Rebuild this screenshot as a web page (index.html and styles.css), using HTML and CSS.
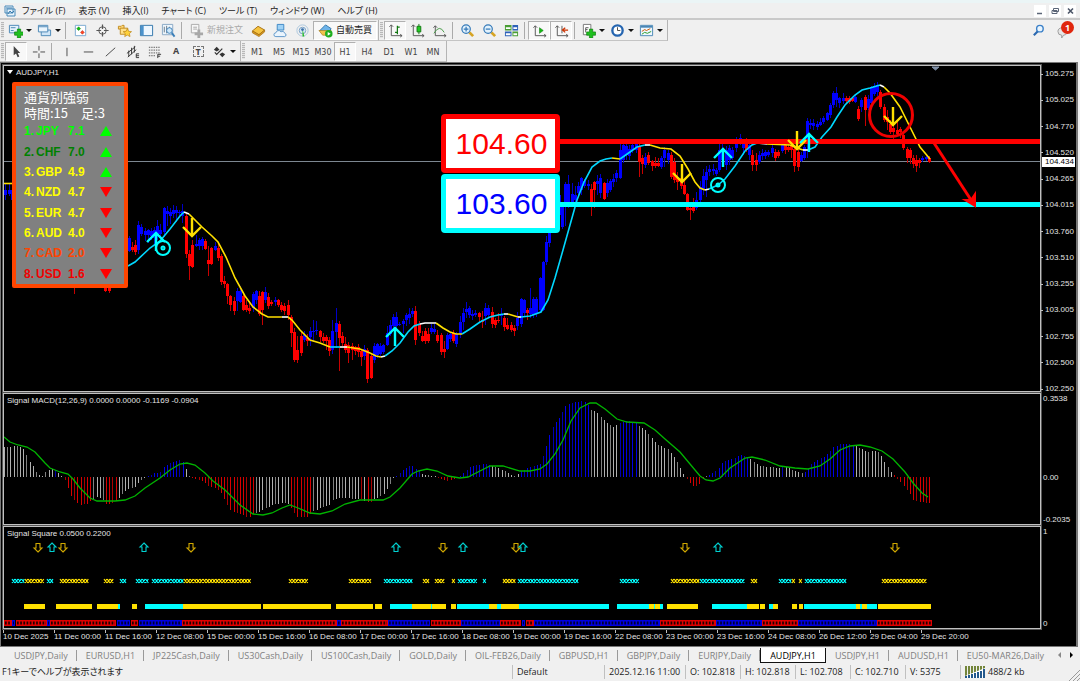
FILE: index.html
```html
<!DOCTYPE html>
<html lang="ja">
	<head>
		<meta charset="UTF-8">
		<title>AUDJPY,H1</title>
		<link rel="stylesheet" href="styles.css">
	</head>
	<body>
		<!--メニュー-->
		<header class="menubar">
			<svg class="logo" viewBox="0 0 12 12"><path d="M1 1h8v7H1zM3 4h8v7H3z" fill="#e8f4fc" stroke="#4a8ab8"/><path d="M4 9l2-3 2 2 2-2M2 3h6" fill="none" stroke="#3a7cae"/></svg>
			<nav>
				<a href="#">ファイル (F)</a>
				<a href="#">表示 (V)</a>
				<a href="#">挿入(I)</a>
				<a href="#">チャート (C)</a>
				<a href="#">ツール (T)</a>
				<a href="#">ウィンドウ (W)</a>
				<a href="#">ヘルプ (H)</a>
			</nav>
			<div class="winbtns">
				<button aria-label="最小化"><svg viewBox="0 0 12 12"><path d="M3 8.500h5" stroke="#5b6577" stroke-width="1.500"/></svg></button>
				<button aria-label="元に戻す"><svg viewBox="0 0 12 12"><path d="M4.500 3.500h5v3h-5zM3 5.500h5v3H3z" fill="#fff" stroke="#5b6577"/></svg></button>
				<button aria-label="閉じる"><svg viewBox="0 0 12 12"><path d="M4 3.500l5 5M9 3.500l-5 5" stroke="#4b5567" stroke-width="1.600"/></svg></button>
			</div>
		</header>

		<!--ツールバー-->
		<div class="toolbar">
			<div class="group first">
				<i class="grip"></i>
				<button class="drop" aria-label="新規チャート"><svg viewBox="0 0 16 16"><path d="M1.500 2.500h10v8h-10z" fill="#e4f1fb" stroke="#4a86b5"/><path d="M3 5h5M3 8h3" stroke="#4a86b5"/><path d="M7 9.500h3v-3h3.500v3h3V13h-3v3H10v-3H7z" fill="#20c020" stroke="#0a7a0a" stroke-width=".7"/></svg></button>
				<button class="drop" aria-label="プロファイル"><svg viewBox="0 0 16 16"><path d="M4.500 7.500h10v6h-10z" fill="#cfe5f7" stroke="#4a86b5"/><path d="M1.500 2.500h10v7h-10z" fill="#eaf5fd" stroke="#4a86b5"/><path d="M2 4h9" stroke="#4a86b5"/></svg></button>
				<i class="sep"></i>
				<button aria-label="気配値"><svg viewBox="0 0 16 16"><path d="M2.500 2.500h11v11h-11z" fill="#fff" stroke="#78a8d0"/><path d="M4 6l2-2 2 2-2 2z" fill="#1b1" stroke="#070" stroke-width=".5"/><path d="M8 10l2-2 2 2-2 2z" fill="#f42" stroke="#a10" stroke-width=".5"/></svg></button>
				<button aria-label="データウィンドウ"><svg viewBox="0 0 16 16"><circle cx="8" cy="8" r="4" fill="none" stroke="#555"/><path d="M8 1.500v5M8 9.500v5M1.500 8h5M9.500 8h5" stroke="#555" stroke-width="1.300"/></svg></button>
				<button aria-label="ナビゲーター"><svg viewBox="0 0 16 16"><path d="M1.500 3.500h3l1-1h2v4h-6z" fill="#ffd97a" stroke="#c08a20"/><path d="M3.500 7V5.500h8V12h-8z" fill="#ffe08a" stroke="#c08a20"/><path d="M11 6l1.400 2.900 3.100.3-2.300 2.100.7 3.200-2.900-1.600L8.200 14.500l.7-3.200L6.600 9.200l3.100-.3z" fill="#ffd23a" stroke="#b88010" stroke-width=".7"/></svg></button>
				<button aria-label="ターミナル"><svg viewBox="0 0 16 16"><path d="M1.500 2.500h13v11h-13z" fill="#eef7ff" stroke="#2f74aa"/><path d="M2 3h3v10H2z" fill="#4b92cc"/></svg></button>
				<button aria-label="テスター"><svg viewBox="0 0 16 16"><path d="M1.500 1.500h11v11h-11z" fill="#eef6fc" stroke="#88a8c4"/><path d="M3.500 4v6M6 3v8M9 4v4" stroke="#678"/><circle cx="9" cy="8" r="3" fill="#cfe8fa" stroke="#3b7fb8"/><path d="M11.500 10.500l3 4" stroke="#3b7fb8" stroke-width="2"/></svg></button>
				<i class="sep"></i>
				<button class="wide off" disabled><svg viewBox="0 0 16 16"><path d="M2.500 1.500h8v9h-8zM4.500 4.500h4M4.500 6.500h4" fill="#f6f6f6" stroke="#aaa"/><path d="M6 10h3V7h3v3h3v3h-3v3H9v-3H6z" fill="#a8a8a8"/></svg>新規注文</button>
				<button aria-label="メタエディター"><svg viewBox="0 0 16 16"><path d="M1.500 8.500l6-5 7 4-6 5z" fill="#f6c440" stroke="#a87010"/><path d="M1.500 8.500v2l7 4 6-5v-2l-6 5z" fill="#d89a20" stroke="#a06a10" stroke-width=".7"/></svg></button>
				<button aria-label="VPS"><svg viewBox="0 0 16 16"><path d="M4.500 1.500h7v6h-7z" fill="#9fd2f6" stroke="#3c86c4"/><path d="M3 14.500a2 2 0 0 1 0-4 3 3 0 0 1 5.500-1 2.500 2.500 0 0 1 4 1.500 1.800 1.800 0 0 1 0 3.500z" fill="#eaf4fd" stroke="#5a94c8"/></svg></button>
				<button aria-label="シグナル"><svg viewBox="0 0 16 16"><circle cx="8" cy="8" r="6" fill="none" stroke="#a9c4dc"/><circle cx="8" cy="8" r="3.500" fill="#d5e8f4" stroke="#7aa0c4"/><path d="M8 6.500l2 8H8z" fill="#2b2"/><circle cx="8" cy="7" r="1.500" fill="#3a6ea8"/></svg></button>
				<button class="wide on"><svg viewBox="0 0 16 16"><path d="M2 8l6-6 6 4-2 3H4z" fill="#6db4ea" stroke="#2f74aa"/><path d="M1 8h13l-3 5H5z" fill="#f0c24a" stroke="#a87a18" stroke-width=".7"/><circle cx="11.500" cy="11.500" r="4" fill="#1fae1f"/><path d="M10.300 9.500v4l3.200-2z" fill="#fff"/></svg>自動売買</button>
			</div>
			<div class="group">
				<i class="grip"></i>
				<button class="on" aria-label="バーチャート"><svg viewBox="0 0 16 16"><path d="M3.500 2v11.500H15M1.500 4l2-2 2 2M13 12l2 1.500-2 1.500" fill="none" stroke="#555"/><path d="M7.500 10H10M10 3v9M10 4.500h2.500" fill="none" stroke="#171" stroke-width="1.300"/></svg></button>
				<button aria-label="ローソク足"><svg viewBox="0 0 16 16"><path d="M3.500 2v11.500H15M1.500 4l2-2 2 2M13 12l2 1.500-2 1.500" fill="none" stroke="#555"/><path d="M9.500 1v11" stroke="#171"/><path d="M7.500 3.500h4v6h-4z" fill="#2c2" stroke="#171"/></svg></button>
				<button aria-label="ラインチャート"><svg viewBox="0 0 16 16"><path d="M3.500 3v10.500H15M1.500 5l2-2 2 2M13 12l2 1.500-2 1.500" fill="none" stroke="#555"/><path d="M2 11q6-10 11-1" fill="none" stroke="#494"/></svg></button>
				<i class="sep"></i>
				<button aria-label="拡大"><svg viewBox="0 0 16 16"><path d="M10 10l4 4" stroke="#d6a424" stroke-width="3"/><circle cx="6.500" cy="6.500" r="4.500" fill="#e2f2fd" stroke="#3479b8" stroke-width="1.300"/><path d="M4 6.500h5M6.500 4v5" stroke="#3479b8" stroke-width="1.300"/></svg></button>
				<button aria-label="縮小"><svg viewBox="0 0 16 16"><path d="M10 10l4 4" stroke="#d6a424" stroke-width="3"/><circle cx="6.500" cy="6.500" r="4.500" fill="#e2f2fd" stroke="#3479b8" stroke-width="1.300"/><path d="M4 6.500h5" stroke="#3479b8" stroke-width="1.300"/></svg></button>
				<button aria-label="整列"><svg viewBox="0 0 16 16"><path d="M1 2h7v6H1zM9 9h6v5H9z" fill="#4a9e34"/><path d="M9 2h6v6H9zM1 9h7v5H1z" fill="#2e62b8"/><path d="M2 4.500h5v2H2zM10 4.500h4v2h-4zM2 11h5v2H2zM10 11h4v2h-4z" fill="#fff"/></svg></button>
				<i class="sep"></i>
				<button class="on" aria-label="自動スクロール"><svg viewBox="0 0 16 16"><path d="M3.500 3v10.500H15M1.500 5l2-2 2 2M13 12l2 1.500-2 1.500" fill="none" stroke="#555"/><path d="M8 5v6l4-3z" fill="#1b1" stroke="#171" stroke-width=".6"/></svg></button>
				<button class="on" aria-label="チャートシフト"><svg viewBox="0 0 16 16"><path d="M3.500 3v10.500H15M1.500 5l2-2 2 2M8.500 3v8M13 12l2 1.500-2 1.500" fill="none" stroke="#555"/><path d="M15 7.500h-5M12 5l-3 2.500 3 2.500" fill="none" stroke="#c30" stroke-width="1.300"/></svg></button>
				<i class="sep"></i>
				<button class="drop" aria-label="インディケータ"><svg viewBox="0 0 16 16"><path d="M2.500 1.500h8v11h-8z" fill="#fff" stroke="#777"/><path d="M5 10V5h3M5 7h2" fill="none" stroke="#555"/><path d="M6 9.500h3v-3h3.500v3h3V13h-3v3H9v-3H6z" fill="#20c020" stroke="#0a7a0a" stroke-width=".7"/></svg></button>
				<button class="drop" aria-label="時間足"><svg viewBox="0 0 16 16"><circle cx="8" cy="8" r="5.500" fill="#fff" stroke="#2565b0" stroke-width="2.500"/><path d="M8 4.500V8h3" fill="none" stroke="#444"/></svg></button>
				<button class="drop" aria-label="定型チャート"><svg viewBox="0 0 16 16"><path d="M1.500 2.500h13v11h-13z" fill="#eef7ff" stroke="#4a86b5"/><path d="M2 4h12" stroke="#4a86b5" stroke-width="2"/><path d="M3 9l3-2 2 1 4-2" fill="none" stroke="#c50"/><path d="M3 12l3-2 3 1 4-2" fill="none" stroke="#292"/></svg></button>
			</div>
			<div class="right">
				<button aria-label="検索"><svg viewBox="0 0 16 16"><circle cx="9.500" cy="6" r="3.500" fill="#e8f5ff" stroke="#3b80c8" stroke-width="1.500"/><path d="M7 9l-4 4" stroke="#2a68b0" stroke-width="2.200"/></svg></button>
				<button class="notice" aria-label="通知"><svg viewBox="0 0 16 16"><path d="M1 9a5 4 0 1 1 6 4l-2 3v-3a4 4 0 0 1-4-4z" fill="#e6e6e6" stroke="#999"/></svg><b>1</b></button>
			</div>
		</div>
		<div class="toolbar">
			<div class="group">
				<i class="grip"></i>
				<button class="on" aria-label="カーソル"><svg viewBox="0 0 16 16"><path d="M5 2v10l2.500-2 1.700 4 1.800-.8L9.300 9.500H12z" fill="#444"/></svg></button>
				<button aria-label="クロスヘア"><svg viewBox="0 0 16 16"><path d="M8.500 2v5M8.500 10v5M2 8.500h5M10 8.500h5" stroke="#444"/></svg></button>
				<i class="sep"></i>
				<button aria-label="垂直線"><svg viewBox="0 0 16 16"><path d="M8.500 4v9" stroke="#444"/></svg></button>
				<button aria-label="水平線"><svg viewBox="0 0 16 16"><path d="M3 8.500h10" stroke="#444"/></svg></button>
				<button aria-label="トレンドライン"><svg viewBox="0 0 16 16"><path d="M3 13l10-9" stroke="#444"/></svg></button>
				<button aria-label="チャネル"><svg viewBox="0 0 16 16"><path d="M2 10l9-7M3 14l9-8M4 7v6M7 4v7M10 2v7" stroke="#333"/><path d="M15 10.500h-3v4h3M12 12.500h3" fill="none" stroke="#333"/></svg></button>
				<button aria-label="フィボナッチ"><svg viewBox="0 0 16 16"><path d="M2 3.500h12M2 6.500h12M2 9.500h12M2 12.500h7" stroke="#555" stroke-dasharray="1.500 1"/><path d="M11.500 15v-4H15M11.500 13H14" fill="none" stroke="#333"/></svg></button>
				<button class="letter">A</button>
				<button class="letter"><span>T</span></button>
				<button class="drop" aria-label="矢印"><svg viewBox="0 0 16 16"><path d="M2 6l3-3 3 3-3 2z" fill="#333"/><path d="M8 11l3-2 3 2-3 3z" fill="#333"/><path d="M3 9l2 2 6-6" fill="none" stroke="#333" stroke-width="1.300"/></svg></button>
			</div>
			<div class="group periods">
				<i class="grip"></i>
				<button>M1</button><button>M5</button><button>M15</button><button>M30</button><button class="on">H1</button><button>H4</button><button>D1</button><button>W1</button><button>MN</button>
			</div>
		</div>

		<!--チャート-->
		<main class="workspace">
			<section class="plot">
				<h1 class="caption">AUDJPY,H1</h1>
				<svg id="price" viewBox="4 66 1036 325" preserveAspectRatio="none"></svg>
				<div class="strength">
					<p>通貨別強弱</p>
					<p>時間:15　足:3</p>
					<ol id="strength"></ol>
				</div>
				<div class="levels">
					<div class="level">104.60</div>
					<div class="level low">103.60</div>
				</div>
			</section>
			<div class="axis">
				<ul class="scale" id="scale"></ul>
				<span class="now">104.434</span>
			</div>
			<section class="plot">
				<h2 class="caption">Signal MACD(12,26,9) 0.0000 0.0000 -0.1169 -0.0904</h2>
				<svg id="macd" viewBox="4 394 1036 130" preserveAspectRatio="none"></svg>
			</section>
			<div class="axis">
				<ul class="scale macd"><li>0.3538</li><li>0.00</li><li>-0.2035</li></ul>
			</div>
			<section class="plot">
				<h2 class="caption">Signal Square 0.0500 0.2200</h2>
				<svg id="square" viewBox="4 527 1036 101" preserveAspectRatio="none"></svg>
			</section>
			<div class="axis">
				<ul class="scale square"><li>1</li><li>0</li></ul>
			</div>
			<ul class="times" id="times"></ul>
		</main>

		<!--タブ-->
		<nav class="tabs">
			<div class="list">
				<a href="#">USDJPY,Daily</a><a href="#">EURUSD,H1</a><a href="#">JP225Cash,Daily</a><a href="#">US30Cash,Daily</a><a href="#">US100Cash,Daily</a><a href="#">GOLD,Daily</a><a href="#">OIL-FEB26,Daily</a><a href="#">GBPUSD,H1</a><a href="#">GBPJPY,Daily</a><a href="#">EURJPY,Daily</a><a href="#" class="current">AUDJPY,H1</a><a href="#">USDJPY,H1</a><a href="#">AUDUSD,H1</a><a href="#">EU50-MAR26,Daily</a>
			</div>
			<button class="prev" aria-label="前へ"></button>
			<button class="next" aria-label="次へ"></button>
		</nav>
		<footer class="status">
			<span class="help">F1キーでヘルプが表示されます</span>
			<span class="profile">Default</span>
			<span class="date">2025.12.16 11:00</span>
			<span>O: 102.818</span>
			<span>H: 102.818</span>
			<span>L: 102.708</span>
			<span>C: 102.710</span>
			<span>V: 5375</span>
			<span class="traffic"><svg viewBox="0 0 20 12"><path d="M0 6h20" stroke="#73853a" stroke-width="12" stroke-dasharray="2 1"/><path d="M0 12V10L20 2v10z" fill="#fff"/><path d="M1 12v-2M4 12V9M7 12V8M10 12V7M13 12V6M16 12V5M19 12V3" stroke="#23588c" stroke-width="2"/></svg>488/2 kb</span>
			<svg class="corner" viewBox="0 0 12 12"><path d="M1 12L12 1M5 12l7-7M9 12l3-3" stroke="#999"/></svg>
		</footer>
		<script src="chart.js"></script>
	</body>
</html>
```
FILE: styles.css
```css
* {
	box-sizing: border-box;
	margin: 0;
	padding: 0
}

ul, ol {
	list-style: none
}

a {
	color: inherit;
	text-decoration: none
}

svg {
	display: block
}

body {
	display: flex;
	flex-direction: column;
	min-height: 100vh;
	border-top: 3px solid #ebf5f6;
	background-color: #f0f0f0;
	color: #222;
	font: 9px/14px "Open Sans", "Noto Sans CJK JP", sans-serif;
	font-feature-settings: "palt";
	overflow: hidden;
}

button {
	position: relative;
	display: flex;
	align-items: center;
	justify-content: center;
	border: 0;
	background: none;
	color: inherit;
	font: inherit;
}

/* menu */
.menubar {
	display: flex;
	align-items: center;
	height: 17px;
	padding: 0 4px;
	border-bottom: 2px solid #c9c9c9;
}

.logo {
	width: 12px;
	height: 12px;
}

.menubar nav {
	display: flex;
	gap: 13px;
	flex: 1;
	padding-left: 6px;
	white-space: nowrap;
}

.winbtns {
	display: flex;
	gap: 3px;
}

.winbtns button {
	width: 12px;
	height: 12px;
	background-color: #fff;
}

.winbtns svg {
	width: 12px;
}

/* toolbars */
.toolbar {
	display: flex;
	height: 21px;
}

.group {
	display: flex;
	align-items: center;
	padding-right: 2px;
	border-right: 1px solid #b4b4b4;
	border-bottom: 1px solid #c4c4c4;
}

.group button {
	width: 22px;
	height: 19px;
	flex: none;
}

.toolbar svg {
	width: 15px;
	height: 15px;
}

.grip {
	width: 3px;
	height: 16px;
	margin: 0 1px;
	background: repeating-linear-gradient(#b8b8b8 0 1px, #e4e4e4 1px 2px);
}

.sep {
	width: 1px;
	height: 17px;
	margin: 0 3px 0 2px;
	background-color: #aaa;
}

.group .on {
	border: 1px solid #b0b0b0;
	border-right-color: #fff;
	border-bottom-color: #fff;
	background-color: #f8f8f8;
}

.group .drop {
	width: 29px;
	padding-right: 9px;
}

.drop::after {
	content: "";
	position: absolute;
	right: 2px;
	top: 8px;
	border: 3px solid transparent;
	border-top-color: #111;
}

.group .wide {
	width: auto;
	padding: 0 4px;
	gap: 3px;
}

.off {
	color: #aaa;
}

.first {
	padding-right: 1px;
}

.letter {
	color: #444;
	font-weight: bold;
}

.letter span {
	width: 11px;
	border: 1px dashed #777;
	line-height: 9px;
}

.periods {
	color: #444;
	font: 8px/12px "DejaVu Sans", sans-serif;
}

.periods button {
	padding-top: 3px;
}

.right {
	display: flex;
	align-items: center;
	gap: 8px;
	margin-left: auto;
	padding-right: 6px;
}

.notice {
	width: 20px;
	height: 19px;
}

.notice b {
	position: absolute;
	right: 0;
	top: 0;
	width: 13px;
	height: 13px;
	border-radius: 50%;
	background-color: #e0260e;
	color: #fff;
	line-height: 13px;
}

/* chart window */
.workspace {
	display: grid;
	flex: 1;
	grid-template-columns: 1fr 35px;
	grid-template-rows: 327fr 132fr 103fr 15px;
	row-gap: 1px;
	border: solid #777;
	border-width: 1px 2px 1px 1px;
	padding: 2px 0 1px 2px;
	margin-right: 2px;
	background-color: #000;
	color: #e4e4e4;
	font: 8px/10px "Liberation Sans", Arial, sans-serif;
}

.plot {
	position: relative;
	min-height: 0;
	border: 1px solid #c0c0c0;
	outline: 1px solid #555;
}

.plot > svg {
	position: absolute;
	width: 100%;
	height: 100%;
}

.caption {
	position: absolute;
	left: 3px;
	top: 2px;
	z-index: 1;
	font-size: 8px;
	font-weight: normal;
}

h1.caption::before {
	content: "";
	display: inline-block;
	margin: 0 3px 1px 0;
	border: solid transparent;
	border-width: 4px 3px 0;
	border-top-color: #fff;
}

.axis {
	position: relative;
	min-height: 0;
}

.scale {
	display: flex;
	flex-direction: column;
	justify-content: space-between;
	height: 100%;
	padding: 9px 0 3px;
}

.scale li {
	position: relative;
	display: flex;
	align-items: center;
	height: 0;
	padding-left: 4px;
}

.scale li::before {
	content: "";
	position: absolute;
	left: 0;
	width: 2px;
	height: 1px;
	background-color: #c0c0c0;
}

.scale.macd {
	display: grid;
	grid-template-rows: 78fr 42fr 0px;
	padding: 6px 0 5px;
}

.macd li, .square li {
	padding-left: 2px;
}

.macd li::before, .square li::before {
	width: 0;
}

.scale.square {
	padding: 6px 0 5px;
}

.now {
	position: absolute;
	left: 1px;
	top: 28%;
	padding: 0 1px 0 3px;
	background-color: #fff;
	color: #000;
}

.times {
	display: grid;
	grid-column: span 2;
	grid-template-columns: repeat(19, minmax(0, 51fr)) 104fr;
	white-space: nowrap;
}

.times li {
	padding-top: 2px;
	background: linear-gradient(#c0c0c0, #c0c0c0) 0 0 / 1px 3px no-repeat;
}

/* currency strength panel */
.strength {
	position: absolute;
	left: 8px;
	top: 16px;
	display: flex;
	flex-direction: column;
	width: 116px;
	height: 206px;
	padding: 3px 8px 0;
	border: 4px solid orangered;
	border-radius: 2px;
	background-color: #808080;
	color: #fff;
	font: 13px/16px "Noto Sans CJK JP", sans-serif;
}

.strength ol {
	display: flex;
	flex-direction: column;
	flex: 1;
	font: bold 12px/20px "Liberation Sans", Arial, sans-serif;
}

.strength li {
	display: grid;
	grid-template-columns: 12px 32px 32px 12px;
	flex: 1;
	align-items: center;
}

.strength i {
	border: solid transparent;
	border-width: 0 6px 10px;
	border-bottom-color: #0f0;
}

.strength .down {
	border-width: 10px 6px 0;
	border-top-color: red;
}

.lime { color: #0f0 }
.green { color: #008000 }
.yellow { color: #ff0 }
.orange { color: orangered }
.red { color: #f00000 }

/* price levels */
.levels {
	position: absolute;
	left: 437px;
	top: 48px;
	display: flex;
	flex-direction: column;
	gap: 1px;
}

.level {
	width: 119px;
	padding-left: 2px;
	border: 5px solid red;
	border-radius: 4px;
	background-color: #fff;
	color: red;
	font: 30px/49px "Liberation Sans", Arial, sans-serif;
	text-align: center;
}

.low {
	border-color: cyan;
	color: blue;
}

/* chart tabs */
.tabs {
	display: flex;
	height: 16px;
	color: #808080;
	line-height: 15px;
}

.list {
	display: flex;
	flex: 1;
	align-items: center;
	padding-left: 5px;
	overflow: hidden;
	white-space: nowrap;
}

.list a {
	height: 15px;
	padding: 0 9px;
	background: linear-gradient(#999, #999) 100% 2px / 1px 11px no-repeat;
}

.list a:last-child {
	background: none;
}

.list .current {
	border: 1px solid #111;
	border-top: 0;
	background: #fff;
	color: #000;
}

.tabs button {
	width: 15px;
}

.tabs button::before {
	content: "";
	border: 3px solid transparent;
}

.tabs .prev::before {
	border-right-color: #888;
}

.tabs .next::before {
	border-left-color: #000;
}

/* status bar */
.status {
	position: relative;
	display: flex;
	align-items: center;
	height: 18px;
	white-space: nowrap;
}

.status span {
	width: 55px;
	padding-left: 4px;
	border-left: 1px solid #c0c0c0;
}

.status .help {
	flex: 1;
	padding-left: 2px;
	border: 0;
}

.status .profile {
	width: 92px;
}

.status .date {
	width: 81px;
}

.status .traffic {
	display: flex;
	align-items: center;
	gap: 3px;
	width: 120px;
}

.traffic svg {
	width: 20px;
	height: 12px;
}

.corner {
	position: absolute;
	right: 0;
	bottom: 0;
	width: 12px;
}
```
FILE: chart.js
```js
var NS = "http://www.w3.org/2000/svg";
var STEP = 3.19;

function my$(id) {
	return document.getElementById(id);
}

function draw(svg, d, color, width) {
	var p = document.createElementNS(NS, "path");
	p.setAttribute("d", d);
	p.setAttribute("fill", "none");
	p.setAttribute("stroke", color);
	p.setAttribute("stroke-width", width || 1);
	svg.appendChild(p);
	return p;
}

function rect(svg, x, y, w, h, color) {
	return draw(svg, "M" + x + " " + (y + h / 2) + "h" + w, color, h);
}

//目盛り
["105.275", "105.025", "104.770", "104.520", "104.265", "104.015", "103.760", "103.510", "103.255", "103.005", "102.755", "102.500", "102.250"].forEach(function(t) {
	my$("scale").innerHTML += "<li>" + t + "</li>";
});
["10 Dec 2025", "11 Dec 00:00", "11 Dec 16:00", "12 Dec 08:00", "15 Dec 00:00", "15 Dec 16:00", "16 Dec 08:00", "17 Dec 00:00", "17 Dec 16:00", "18 Dec 08:00", "19 Dec 00:00", "19 Dec 16:00", "22 Dec 08:00", "23 Dec 00:00", "23 Dec 16:00", "24 Dec 08:00", "26 Dec 12:00", "29 Dec 04:00", "29 Dec 20:00"].forEach(function(t) {
	my$("times").innerHTML += "<li>" + t + "</li>";
});

//通貨の強さ
[["JPY", "7.1", "lime", "up"], ["CHF", "7.0", "green", "up"], ["GBP", "4.9", "yellow", "up"], ["NZD", "4.7", "yellow", "down"], ["EUR", "4.7", "yellow", "down"], ["AUD", "4.0", "yellow", "down"], ["CAD", "2.0", "orange", "down"], ["USD", "1.6", "red", "down"]].forEach(function(c, i) {
	my$("strength").innerHTML += '<li class="' + c[2] + '"><span>' + (i + 1) + ".</span><span>" + c[0] + "</span><span>" + c[1] + '</span><i class="' + c[3] + '"></i></li>';
});

//ローソク足: x 高値 実体上 実体下 安値 色
var candles = "5 183 190 195 200 b,9 184 190 194 196 b,12 184 190 200 202 b,74 280 284 286 294 r,105 280 285 291 292 r,109 280 285 291 293 r," +
	"129 236 238 251 252 b,132 242 247 250 252 r,135 240 245 252 255 r,138 221 225 250 254 b,141 224 227 234 236 b,145 228 231 235 241 b,148 229 230 235 243 b,151 228 231 236 240 b,154 227 230 238 244 b,157 220 226 236 240 b,160 224 230 234 238 b,164 207 208 232 237 b,167 206 211 214 226 b,170 208 212 216 224 b,173 205 210 214 218 b,176 206 210 213 222 b,179 210 212 213 217 b,182 204 211 216 223 b," +
	"186 214 216 254 258 r,189 250 254 266 280 r,192 240 245 267 268 r,196 235 244 246 247 b,199 238 240 246 250 b,202 237 239 246 250 b,205 239 241 249 250 r,208 246 260 264 276 r,211 247 248 264 265 r,215 242 246 250 251 b,218 244 248 258 261 r,221 254 256 282 285 r,224 276 281 284 288 r,227 283 284 296 304 r,230 295 296 305 311 r,234 297 301 311 315 r,237 288 291 301 311 b,240 286 291 302 303 b,243 295 296 310 311 r,246 300 305 310 312 r,249 301 308 311 314 r,253 292 294 308 312 b,256 290 291 300 304 b,259 291 296 314 316 r,262 291 292 310 325 r,265 287 292 300 303 b,268 293 297 306 309 r,271 300 302 304 306 r,275 297 300 302 306 b,278 299 300 305 307 r,281 302 305 310 312 r,284 303 306 311 315 r,288 300 305 315 320 r," +
	"291 315 317 333 347 r,294 328 332 360 362 r,297 336 350 360 363 r,301 332 336 353 356 r,304 331 335 340 342 b,307 334 338 341 346 r,310 327 331 337 346 b,313 320 331 332 342 b,316 321 330 331 335 b,320 330 331 337 342 r,323 333 337 341 343 r,326 335 337 341 350 r,329 337 340 351 356 r,332 320 331 350 354 b,336 308 323 332 348 b,339 321 324 338 371 r,342 332 336 343 346 r,345 337 344 350 353 r,348 342 345 353 363 r,352 343 346 350 360 r,355 346 347 351 355 r,358 344 347 352 357 r,361 350 351 357 366 r,364 345 349 356 360 b,367 348 350 379 383 r,371 354 356 378 379 r,374 343 346 360 363 b,377 343 344 355 358 b,380 343 346 354 357 b,383 344 345 352 354 b,387 326 333 345 346 b,390 320 325 334 336 b,393 314 317 326 330 b,396 312 317 326 329 b,399 322 324 325 326 b," +
	"403 319 321 324 333 b,406 313 315 320 326 b,409 308 314 318 324 b,412 308 311 314 317 b,415 306 311 340 345 r,419 321 324 333 336 r,422 331 336 341 342 r,425 328 331 341 344 r,428 328 334 341 343 r,431 324 328 332 334 b,434 324 329 332 334 b,437 330 335 341 343 r,441 333 335 352 355 r,444 341 349 352 358 r,447 333 335 349 350 b,450 332 334 339 342 b,453 330 333 341 343 r,456 332 334 344 347 b,460 316 322 334 338 b,463 308 313 322 330 b,466 302 309 312 318 b,469 306 308 315 318 b,472 310 314 316 320 b,475 310 313 315 317 b,479 312 313 317 323 r,482 311 320 322 328 r,485 303 308 316 325 b,488 305 308 315 318 b,492 307 312 324 328 r,495 318 320 325 328 r,498 313 320 321 323 r,501 308 314 316 325 b,504 316 318 327 331 r,507 318 325 329 330 r,511 322 325 330 332 r,514 325 328 331 336 r,517 312 318 326 330 b," +
	"521 298 299 324 327 b,524 299 300 313 316 b,527 308 310 313 320 r,530 288 308 314 318 b,533 297 299 315 318 b,536 297 299 314 317 b,540 277 278 310 312 b,543 261 262 310 311 b,546 236 242 262 265 b,549 210 215 243 247 b,553 195 205 228 230 b,556 193 200 215 220 b,559 190 195 215 222 b,562 205 207 227 229 b,565 182 184 206 226 b,568 175 184 203 208 b,572 183 194 202 203 b,575 186 195 200 203 b,578 182 186 193 196 b,581 177 178 190 195 b,584 179 181 186 188 b,588 180 184 186 190 b,591 184 189 207 216 r,594 181 182 190 208 r,597 175 181 184 195 b,600 174 178 193 198 b,604 182 183 199 200 r,607 179 183 193 197 b,610 179 181 190 192 b,613 174 179 182 187 b,616 170 173 178 182 b,620 144 150 178 179 b,623 143 145 160 163 b,626 144 146 155 160 b,629 145 149 156 160 b,632 143 145 150 153 b,636 142 144 150 153 b," +
	"639 142 146 162 177 r,642 155 158 164 174 r,645 153 157 165 168 b,648 152 155 163 165 r,652 160 161 166 171 r,655 157 163 166 168 r,658 158 163 166 167 r,661 156 158 167 169 b,664 147 150 158 167 b,668 150 153 160 164 b,671 152 155 177 179 r,674 158 162 180 183 r,677 172 178 182 190 r,681 172 178 186 189 r,684 181 185 194 195 r,687 193 194 210 211 r,690 205 208 210 220 r,693 198 206 211 213 r,696 192 200 208 210 b,700 181 187 200 203 b,703 169 176 190 195 b,706 166 172 180 197 b,709 165 169 172 176 b,713 164 169 171 175 b,716 168 170 174 176 b,719 143 150 170 172 b,722 144 152 160 163 b,726 146 150 165 170 b,729 145 148 160 165 b,732 147 150 158 160 b,736 137 140 148 152 b,740 134 138 142 145 b,743 140 143 148 155 b,746 138 144 150 152 r,749 142 145 155 160 b,752 150 155 165 171 r,756 153 160 165 171 r,759 151 155 162 164 b,762 149 153 156 160 b,765 150 152 156 159 b,768 150 152 155 157 b,772 145 148 153 157 b,775 149 152 158 161 r,778 150 152 156 158 r,782 143 145 151 153 b,785 143 145 150 154 r,788 142 147 150 152 r,791 143 146 150 158 r,794 145 149 166 172 r,798 148 152 167 171 r," +
	"801 152 155 161 162 b,804 145 147 158 160 b,807 118 121 143 158 b,810 119 123 125 129 b,813 119 123 126 130 b,817 121 124 127 130 b,820 118 122 125 126 b,823 116 118 122 124 b,827 112 113 120 121 b,830 103 105 115 118 b,833 91 93 105 108 b,836 87 93 100 107 b,839 97 98 103 108 b,843 93 98 101 104 b,846 96 98 101 103 r,849 96 98 102 104 r,852 97 98 101 102 r,855 95 97 102 103 b,858 106 109 119 121 r,861 98 100 107 112 b,865 95 97 110 126 r,868 95 99 108 110 b,871 86 87 103 105 b,874 83 86 94 96 b,877 82 85 92 96 b,880 90 92 107 109 r,884 104 107 120 122 r,887 110 117 122 130 r,890 120 124 132 134 r,893 125 128 132 143 r,897 120 130 134 136 r,900 127 129 132 138 r,903 131 135 148 150 r,907 147 149 158 163 r,910 148 150 158 164 r,913 155 158 164 168 r,916 155 160 166 172 r,919 158 160 163 168 r,922 156 158 160 162 b,926 154 157 159 161 b,929 156 158 162 163 r";

var price = my$("price");
rect(price, 4, 161, 1036, 1, "#7d8791");
candles.split(",").forEach(function(row) {
	var c = row.split(" ");
	var up = c[5] == "b";
	draw(price, "M" + (+c[0] + .5) + " " + c[1] + "V" + c[4], up ? "#0000c8" : "#c80000");
	draw(price, "M" + (+c[0] + .5) + " " + c[2] + "V" + c[3], up ? "#0000ff" : "#ff0000", 3);
});

//移動平均線
var average = [
	["y", "4 183.5 12 183.5"],
	["c", "128 266 135 262 150 248 160 241 170 229 180 216 184 212"],
	["w", "184 212 189 214"],
	["y", "189 214 202 227 212 236 218 242 226 257 235 278 245 296 253 307 262 314 268 317 282 317"],
	["w", "282 317 288 317"],
	["y", "288 317 292 320 300 330 310 340 320 343 330 347"],
	["c", "330 347 340 347"],
	["w", "340 347 347 347"],
	["y", "347 347 360 349 370 353 376 356 381 357"],
	["w", "381 357 385 356"],
	["c", "385 356 392 351 400 343 408 332 414 326 420 324"],
	["w", "420 324 425 323 436 323"],
	["y", "436 323 443 328 450 332 456 334 462 334"],
	["c", "462 334 470 329 480 322 490 317 498 315 504 314"],
	["w", "504 314 508 314"],
	["y", "508 314 518 317"],
	["w", "518 317 521 317"],
	["c", "521 317 530 316 541 312 548 300 555 278 563 250 570 225 577 200 584 182 592 167 600 161 606 159 612 158"],
	["y", "612 158 620 159"],
	["c", "620 159 630 152 637 147 645 145"],
	["w", "645 145 650 145"],
	["y", "650 145 660 148 671 149 680 156 688 169 695 182 700 188 705 190"],
	["w", "705 190 709 189"],
	["c", "709 189 718 185 725 179 735 166 745 151 752 145 757 143"],
	["w", "757 143 767 144"],
	["y", "767 144 790 145 797 148 803 150"],
	["w", "803 150 808 150"],
	["c", "808 150 815 147 822 137 831 127 837 117 845 105 855 95 862 90 870 88 880 85"],
	["w", "880 85 884 87"],
	["y", "884 87 890 93 900 107 910 127 920 147 930 159"]
];
var colors = {y: "#ffe000", c: "#00d8ff", w: "#ffffff"};
average.forEach(function(s) {
	draw(price, "M" + s[1], colors[s[0]], 1.6);
});

//水平ラインと予想
rect(price, 560, 139, 480, 5, "#ff0000");
rect(price, 560, 202, 480, 5, "#00ffff");
draw(price, "M934 143L973 203", "#ff0000", 3);
draw(price, "M965 200l10 6v-12l-4 6z", "#ff0000", 2).setAttribute("fill", "#ff0000");
draw(price, "M869.500 115a21.500 21.500 0 1 0 43 0a21.500 21.500 0 1 0-43 0", "#f00000", 3);

//売買サイン
[[156, 232, 1], [192, 237, 0], [395, 327, 1], [682, 183, 0], [723, 148, 1], [797, 150, 0], [809, 133, 1], [893, 126, 0]].forEach(function(a) {
	var s = a[2] ? 1 : -1;
	draw(price, "M" + a[0] + " " + (a[1] + s) + "v" + 18 * s + "M" + (a[0] - 9) + " " + (a[1] + 10 * s) + "L" + a[0] + " " + (a[1] + s) + "L" + (a[0] + 9) + " " + (a[1] + 10 * s), a[2] ? "#00ffff" : "#ffe000", 2.4);
});
[[163, 248], [718, 185]].forEach(function(c) {
	draw(price, "M" + (c[0] - 7) + " " + c[1] + "a7 7 0 1 0 14 0a7 7 0 1 0-14 0", "#00ffff", 2);
	draw(price, "M" + (c[0] - 1) + " " + c[1] + "a1 1 0 1 0 2 0a1 1 0 1 0-2 0", "#00ffff", 3);
});
draw(price, "M932 67h7l-3.500 3z", "#8090a8").setAttribute("fill", "#8090a8");

//MACD
var macd = my$("macd");
var hist = [4, 447, 10, 447, 13, 446, 18, 446, 24, 449, 29, 460, 33, 466, 36, 471, 39, 475, 42, 477, 46, 472, 51, 469, 55, 470, 58, 472, 61, 476, 64, 478, 67, 484, 71, 495, 75, 500, 80, 505, 87, 504, 92, 500, 98, 497, 103, 499, 107, 505, 114, 503, 118, 500, 122, 494, 127, 490, 135, 487, 139, 482, 145, 478, 148, 476, 155, 473, 160, 473, 163, 468, 167, 465, 173, 462, 180, 460, 184, 462, 186, 468, 189, 476, 195, 479, 200, 480, 205, 483, 210, 487, 216, 488, 220, 491, 224, 498, 228, 505, 231, 510, 235, 513, 242, 514, 246, 517, 250, 517, 252, 515, 257, 513, 262, 511, 268, 507, 276, 504, 288, 503, 291, 507, 295, 513, 298, 517, 308, 517, 313, 512, 318, 509, 330, 505, 334, 499, 340, 498, 362, 499, 365, 501, 370, 503, 373, 500, 380, 497, 385, 493, 390, 485, 393, 479, 398, 475, 403, 470, 409, 466, 412, 465, 416, 469, 420, 471, 423, 475, 436, 476, 440, 479, 447, 481, 455, 479, 460, 477, 466, 471, 470, 467, 477, 465, 486, 464, 491, 466, 498, 468, 505, 471, 510, 474, 516, 476, 521, 471, 528, 468, 534, 466, 540, 465,
	543, 458, 546, 449, 549, 437, 553, 427, 557, 421, 561, 416, 565, 407, 571, 403, 577, 402, 581, 401, 586, 402, 588, 404, 590, 409, 594, 411, 598, 413, 603, 419, 608, 424, 614, 427, 618, 424, 621, 423, 625, 421, 635, 422, 639, 426, 645, 429, 651, 437, 657, 444, 663, 447, 668, 449, 674, 456, 679, 465, 683, 472, 686, 478, 690, 483, 693, 486, 697, 486, 701, 483, 703, 479, 706, 476, 712, 474, 718, 469, 724, 461, 733, 459, 741, 455, 746, 456, 750, 458, 755, 463, 760, 466, 770, 467, 780, 468, 783, 466, 788, 467, 795, 471, 803, 473, 808, 470, 811, 464, 818, 460, 826, 456, 834, 447, 841, 444, 850, 444, 855, 446, 860, 448, 868, 452, 876, 451, 880, 452, 884, 460, 890, 470, 895, 476, 899, 480, 905, 487, 910, 493, 913, 500, 920, 502, 931, 503];
//色が変わる位置
var bands = [4, "g", 54, "b", 57, "g", 63, "r", 91, "g", 105, "r", 118, "g", 146, "b", 185, "g", 191, "r", 256, "g", 290, "r", 313, "g", 361, "r", 363, "g", 366, "r", 373, "g", 396, "b", 421, "g", 437, "r", 458, "b", 491, "g", 520, "b", 589, "g", 620, "b", 637, "g", 684, "r", 704, "g", 708, "b", 749, "g", 780, "b", 786, "g", 805, "b", 856, "g", 894, "r"];
var tones = {g: ["#b0b0b0", "#808080"], b: ["#0000e6", "#0000b0"], r: ["#d80000", "#a80000"]};
for (var i = 0, h = 0, b = 0; 4.5 + i * STEP < 930; i++) {
	var x = 4.5 + i * STEP;
	while (hist[h + 2] < x) h += 2;
	while (bands[b + 2] < x) b += 2;
	var k = Math.max(0, (x - hist[h]) / (hist[h + 2] - hist[h]));
	var y = Math.round(hist[h + 1] + k * (hist[h + 3] - hist[h + 1]));
	draw(macd, "M" + (Math.floor(x) + .5) + " 477V" + (y == 477 ? 476 : y), tones[bands[b + 1]][i % 3 == 1 ? 1 : 0]);
}
draw(macd, "M4 437 10 442 18 445 27 447 35 452 45 463 50 468 60 472 68 474 73 479 80 488 90 498 97 501 115 501 125 500 135 496 145 488 160 478 170 470 180 464 187 463 195 465 205 473 213 481 225 490 240 505 253 514 263 515 272 513 282 508 290 505 298 508 310 513 320 514 332 511 345 504 360 500 383 500 390 497 400 488 412 474 418 471 427 469 437 471 448 476 460 478 468 477 478 472 490 466 503 466 520 471 530 471 540 469 547 464 555 454 563 440 571 421 580 408 590 403 596 403 605 409 617 419 627 422 644 423 655 430 665 439 680 452 690 464 700 476 706 480 713 481 720 478 730 468 745 458 752 457 765 460 780 466 795 468 808 469 820 466 830 459 840 450 850 446 860 445 870 447 882 451 893 459 905 472 913 483 922 493 928 497", "#00b400", 1.3);

//Signal Square
var square = my$("square");
[[38, 0], [52, 1], [63, 0], [144, 1], [191, 0], [396, 1], [443, 0], [463, 1], [516, 0], [523, 1], [685, 0], [718, 1], [895, 0]].forEach(function(a) {
	var s = a[1] ? 1 : -1;
	draw(square, "M" + a[0] + " " + (547.5 - 4.5 * s) + "l4 " + 4 * s + "h-2v" + 4.5 * s + "h-4v" + -4.5 * s + "h-2z", a[1] ? "#00d0d0" : "#d0a800", 1.1);
});

function each(list, fn) {
	list.split(" ").forEach(function(s) {
		var p = s.slice(1).split("-");
		fn(s.charAt(0), +p[0], +p[1]);
	});
}

each("c12-24 y25-43 c47-53 y60-88 y104-113 c120-126 c136-148 c152-183 y184-250 y289-308 y349-371 c384-412 y423-429 y435-444 y452-454 c458-476 c483-485 y503-515 c518-576 c620-636 y671-697 c700-744 y751-757 c779-791 y792-795 y799-802 c805-846 y882-926", function(c, from, to) {
	var d = "";
	for (var x = from; x < to; x += STEP) {
		d += "M" + x + " 579l2.800 4m0-4l-2.800 4";
	}
	draw(square, d, c == "c" ? "#00ffff" : "#ffe000", 1.2);
});
each("y24-45 y56-92 y97-118 c118-120 y132-137 c145-183 y183-261 y263-331 y336-373 y375-382 c390-412 y412-431 c431-432 y432-446 y451-456 c457-489 y489-497 c497-501 y501-519 c519-609 c617-649 y649-654 c654-655 y655-660 c660-663 y667-698 c712-747 y747-759 y760-765 c769-773 y773-778 y792-797 y799-803 c804-856 y856-860 c860-862 y862-867 c867-877 y878-931", function(c, from, to) {
	rect(square, from, 604, to - from, 5, c == "c" ? "#00ffff" : "#ffe000");
});
each("r4-12 b12-15 r16-47 b47-50 r50-116 b117-130 r131-138 b139-182 r182-337 b337-341 r341-388 b388-430 r431-461 b461-500 r500-521 b522-525 r526-534 b534-660 r660-716 b716-762 r762-798 b798-877 r877-932", function(c, from, to) {
	rect(square, from, 620, to - from, 6, c == "r" ? "#e00000" : "#0000e0");
	draw(square, "M" + (from + 1) + " 623H" + (to - 1), c == "r" ? "#200000" : "#000030", 3).setAttribute("stroke-dasharray", "1.700 1.490");
});
```
